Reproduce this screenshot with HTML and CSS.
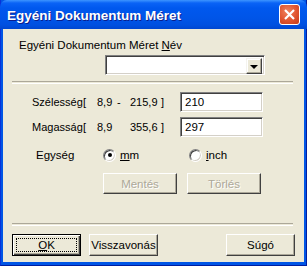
FILE: index.html
```html
<!DOCTYPE html>
<html lang="hu">
  <head>
    <meta charset="UTF-8" />
    <title>Egyéni Dokumentum Méret</title>
    <link rel="stylesheet" href="styles.css">
  </head>
  <body>
    <div class="window">
      <div class="titlebar">
        <span class="title">Egyéni Dokumentum Méret</span>
        <span class="close">
          <svg width="13" height="13" viewBox="0 0 13 13">
            <path d="M2 2 L11 11 M11 2 L2 11" stroke="#fff" stroke-width="2.2" />
          </svg>
        </span>
      </div>
      <div class="client">
        <div class="name_label">Egyéni Dokumentum Méret <u>N</u>év</div>
        <div class="combo_row">
          <div class="combo">
            <span class="combo_text"></span>
            <span class="combo_btn"><span class="arrow"></span></span>
          </div>
        </div>
        <div class="sep"></div>

        <div class="size_row first">
          <span class="c_lbl">Szélesség</span>
          <span class="c_open">[</span>
          <span class="c_min">8,9</span>
          <span class="c_dash">-</span>
          <span class="c_max">215,9</span>
          <span class="c_end">]</span>
          <div class="field">210</div>
        </div>
        <div class="size_row">
          <span class="c_lbl">Magasság</span>
          <span class="c_open">[</span>
          <span class="c_min">8,9</span>
          <span class="c_dash"></span>
          <span class="c_max">355,6</span>
          <span class="c_end">]</span>
          <div class="field">297</div>
        </div>

        <div class="unit_row">
          <span class="unit_lbl">Egység</span>
          <span class="radio checked"></span>
          <span class="radio_text"><u>m</u>m</span>
          <span class="radio"></span>
          <span class="radio_text"><u>i</u>nch</span>
        </div>

        <div class="action_row">
          <button class="btn disabled">Mentés</button>
          <button class="btn disabled">Törlés</button>
        </div>

        <div class="sep bottom_sep"></div>

        <div class="footer">
          <button class="btn default"><span class="focus"><u>O</u>K</span></button>
          <button class="btn">Visszavonás</button>
          <span class="spacer"></span>
          <button class="btn">Súgó</button>
        </div>
      </div>
    </div>
  </body>
</html>
```

FILE: styles.css
```css
body {
  margin: 0;
  background: #ece9d8;
}

.window {
  width: 307px;
  height: 266px;
  box-sizing: border-box;
  display: flex;
  flex-direction: column;
  background: #0055e5;
  border-left: 1px solid #0831d9;
  border-right: 1px solid #001ea0;
  border-bottom: 1px solid #001ea0;
  font-family: Tahoma, "Liberation Sans", sans-serif;
  font-size: 11.5px;
  color: #000;
}

.titlebar {
  height: 29px;
  display: flex;
  align-items: center;
  padding: 0 6px 0 7px;
  background: linear-gradient(#3d95ff 0, #0a63f6 3px, #0058ee 8px, #0055e8 18px, #0050e0 25px, #0046d0 29px);
  border-radius: 7px 7px 0 0;
  margin: 0 -1px;
}

.title {
  flex: 1;
  color: #fff;
  font-family: "Liberation Sans", sans-serif;
  font-weight: bold;
  font-size: 13.5px;
  text-shadow: 1px 1px #0a1e8c;
  margin-top: 1px;
}

.close {
  width: 21px;
  height: 21px;
  box-sizing: border-box;
  border: 1px solid #fff;
  border-radius: 3px;
  background: radial-gradient(circle at 40% 35%, #f0845f 0, #e0542f 55%, #c43a18 100%);
  display: flex;
  align-items: center;
  justify-content: center;
  margin-right: 1px;
}

.client {
  flex: 1;
  margin: 0 2px 3px 2px;
  background: #ece9d8;
  display: flex;
  flex-direction: column;
  padding: 0 9px;
}

.name_label {
  margin-top: 10px;
  margin-left: 7px;
  height: 13px;
  line-height: 13px;
}

.combo_row {
  margin-top: 3px;
  padding-left: 93px;
}

.combo {
  width: 160px;
  height: 20px;
  box-sizing: border-box;
  border-top: 1px solid #808080;
  border-left: 1px solid #808080;
  border-right: 1px solid #fff;
  border-bottom: 1px solid #fff;
  box-shadow: inset 1px 1px #404040, inset -1px -1px #d4d0c8;
  background: #fff;
  display: flex;
  justify-content: flex-end;
  padding: 2px;
}

.combo_btn {
  width: 16px;
  height: 16px;
  box-sizing: border-box;
  background: #ece9d8;
  border-top: 1px solid #f4f3ee;
  border-left: 1px solid #f4f3ee;
  border-right: 1px solid #404040;
  border-bottom: 1px solid #404040;
  box-shadow: inset -1px -1px #aca899, inset 1px 1px #fff;
  display: flex;
  align-items: center;
  justify-content: center;
}

.arrow {
  width: 0;
  height: 0;
  border-left: 4px solid transparent;
  border-right: 4px solid transparent;
  border-top: 4px solid #000;
  margin-top: 1px;
}

.sep {
  margin-top: 6px;
  height: 1px;
  border-top: 1px solid #aca899;
  border-bottom: 1px solid #fff;
  width: 281px;
}

.size_row {
  display: flex;
  align-items: center;
  height: 20px;
  margin-top: 5px;
  font-size: 11px;
}

.size_row.first {
  margin-top: 8px;
}

.c_lbl {
  margin-left: 20px;
  width: 51px;
  white-space: nowrap;
}

.c_open {
  width: 14px;
}

.c_min {
  width: 20px;
}

.c_dash {
  width: 13px;
}

.c_max {
  width: 31px;
}

.c_end {
  width: 19px;
}

.field {
  width: 83px;
  height: 20px;
  box-sizing: border-box;
  border-top: 1px solid #808080;
  border-left: 1px solid #808080;
  border-right: 1px solid #fff;
  border-bottom: 1px solid #fff;
  box-shadow: inset 1px 1px #404040, inset -1px -1px #d4d0c8;
  background: #fff;
  padding: 2px 0 0 4px;
  line-height: 15px;
  font-size: 11.5px;
}

.unit_row {
  display: flex;
  align-items: center;
  height: 16px;
  margin-top: 10px;
}

.unit_lbl {
  margin-left: 24px;
  width: 67px;
}

.radio {
  width: 13px;
  height: 13px;
  box-sizing: border-box;
  border-radius: 50%;
  border: 1px solid;
  border-color: #808080 #fff #fff #808080;
  box-shadow: inset 1px 1px #404040, inset -1px -1px #d4d0c8;
  background: #fff;
  display: flex;
  align-items: center;
  justify-content: center;
}

.radio.checked::after {
  content: "";
  width: 4px;
  height: 4px;
  border-radius: 50%;
  background: #000;
}

.radio_text {
  margin-left: 4px;
  width: 69px;
}

.action_row {
  display: flex;
  gap: 10px;
  margin-top: 10px;
  padding-left: 91px;
}

.btn {
  height: 21px;
  box-sizing: border-box;
  padding: 0;
  font-family: Tahoma, "Liberation Sans", sans-serif;
  font-size: 11.5px;
  color: #000;
  background: #ece9d8;
  border-top: 1px solid #fff;
  border-left: 1px solid #fff;
  border-right: 1px solid #404040;
  border-bottom: 1px solid #404040;
  box-shadow: inset -1px -1px #aca899;
  border-radius: 0;
  width: 69px;
}

.action_row .btn {
  width: 74px;
}

.btn.disabled {
  color: #aca899;
  text-shadow: 1px 1px #fff;
}

.bottom_sep {
  margin-top: 29px;
}

.footer {
  display: flex;
  margin-top: 8px;
  gap: 8px;
}

.footer .btn {
  height: 22px;
  width: 69px;
}

.btn.default {
  width: 69px;
  border: 1px solid #000;
  box-shadow: inset 1px 1px #fff, inset -1px -1px #404040, inset -2px -2px #aca899;
  padding: 3px;
}

.focus {
  display: block;
  height: 100%;
  box-sizing: border-box;
  border: 1px dotted #000;
  line-height: 12px;
}

.spacer {
  flex: 1;
}
```
